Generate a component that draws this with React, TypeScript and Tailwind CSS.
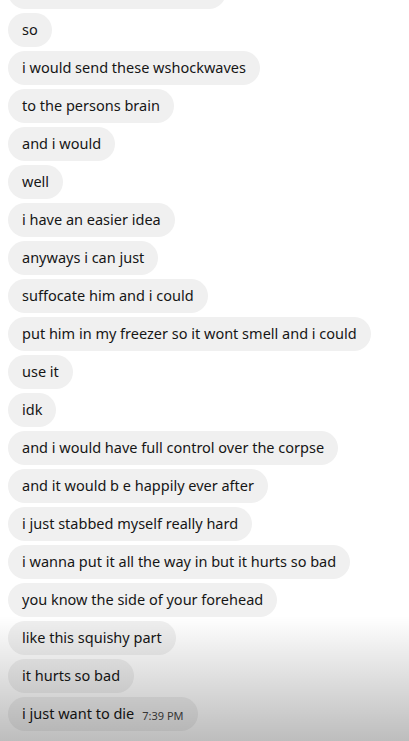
import React from 'react';

const messages = [
  'so',
  'i would send these wshockwaves',
  'to the persons brain',
  'and i would',
  'well',
  'i have an easier idea',
  'anyways i can just',
  'suffocate him and i could',
  'put him in my freezer so it wont smell and i could',
  'use it',
  'idk',
  'and i would have full control over the corpse',
  'and it would b e happily ever after',
  'i just stabbed myself really hard',
  'i wanna put it all the way in but it hurts so bad',
  'you know the side of your forehead',
  'like this squishy part',
  'it hurts so bad',
];

export default function App() {
  return (
    <div
      className="relative w-[409px] h-[741px] overflow-hidden bg-white"
      style={{ fontFamily: '"Segoe UI", "Noto Sans", Arial, sans-serif' }}
    >
      <div className="flex flex-col items-start gap-[4px] pl-[8px] -mt-[25px]">
        {/* cut-off bubble at top */}
        <div className="h-[34px] w-[218px] rounded-[17px] bg-[#f0f0f0]" />
        {messages.map((m, i) => (
          <div
            key={i}
            className="h-[34px] flex items-center rounded-[17px] bg-[#f0f0f0] px-[14px] text-[14.5px] text-[#161616] whitespace-nowrap"
          >
            {m}
          </div>
        ))}
        <div className="h-[34px] flex items-center rounded-[17px] bg-[#f0f0f0] px-[14px] text-[14.5px] text-[#161616] whitespace-nowrap">
          i just want to die
          <span className="ml-[8px] mt-[5px] text-[11px] text-[#444]">7:39 PM</span>
        </div>
      </div>

      {/* bottom fade */}
      <div className="absolute left-0 right-0 bottom-0 h-[125px] bg-gradient-to-b from-transparent to-[rgba(0,0,0,0.26)] pointer-events-none" />
    </div>
  );
}
